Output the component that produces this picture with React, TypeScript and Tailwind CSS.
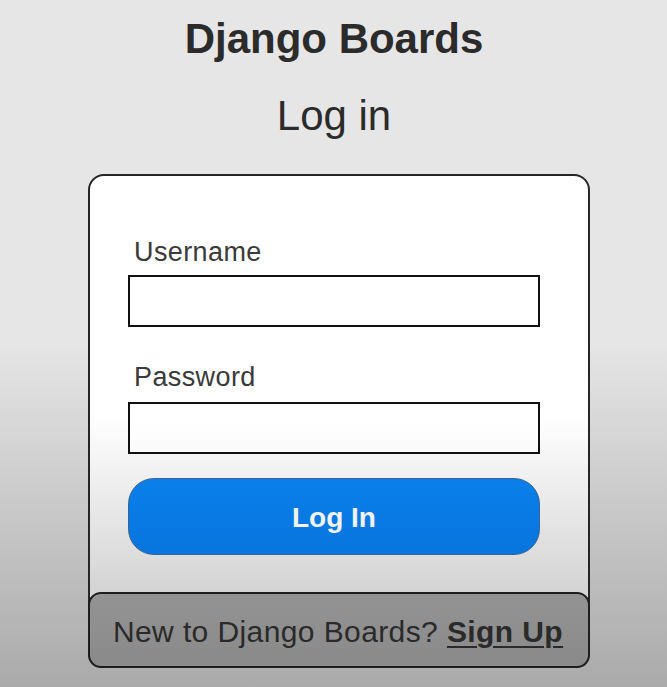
export default function App() {
  return (
    <div
      className="min-h-[687px] w-full text-[#2e2e2e] bg-[linear-gradient(to_bottom,#e6e6e6_0px,#e6e6e6_340px,#aaaaaa_687px)]"
      style={{ fontFamily: '"Liberation Sans", Arial, Helvetica, sans-serif' }}
    >
      <div className="pt-[18px]">
        <h1 className="text-center text-[42px] leading-none font-bold text-[#2b2b2b] ml-[1px]">
          Django Boards
        </h1>
        <h2 className="mt-[35px] text-center text-[42px] leading-none text-[#2b2b2b] ml-[1px]">
          Log in
        </h2>
        <div className="mt-[37px] ml-[88px] w-[502px] rounded-[16px] border-2 border-[#262626] bg-[linear-gradient(to_bottom,#ffffff_0px,#ffffff_240px,#d4d4d4_414px)] flex flex-col">
          <form className="flex flex-col pt-[63px] pl-[38px] pb-[37px]">
            <label className="ml-[6px] text-[27px] leading-none tracking-[0.4px] text-[#3a3a3a]">
              Username
            </label>
            <div className="mt-[9px] w-[412px] h-[52px] border-2 border-[#111111] bg-white/60" />
            <label className="mt-[37px] ml-[6px] text-[27px] leading-none tracking-[0.4px] text-[#3a3a3a]">
              Password
            </label>
            <div className="mt-[11px] w-[412px] h-[52px] border-2 border-[#111111] bg-white/50" />
            <button
              type="button"
              className="mt-[24px] w-[412px] h-[77px] rounded-[26px] border border-[#3b6590] bg-[linear-gradient(to_bottom,#0a7fea,#0875de)] flex items-center justify-center pt-[3px]"
            >
              <span className="text-[28px] leading-none font-bold text-[#f2f2f2]">Log In</span>
            </button>
          </form>
          <div className="-mx-[2px] -mb-[2px] h-[76px] rounded-[13px] border-2 border-[#1e1e1e] bg-[linear-gradient(to_bottom,#939393,#8a8a8a)] flex justify-center pt-[23px]">
            <p className="text-[30px] leading-none tracking-[0.4px] text-[#2a2a2a] -ml-[2px]">
              New to Django Boards?{" "}
              <a className="font-bold underline underline-offset-[4px] decoration-2">Sign Up</a>
            </p>
          </div>
        </div>
      </div>
    </div>
  );
}
